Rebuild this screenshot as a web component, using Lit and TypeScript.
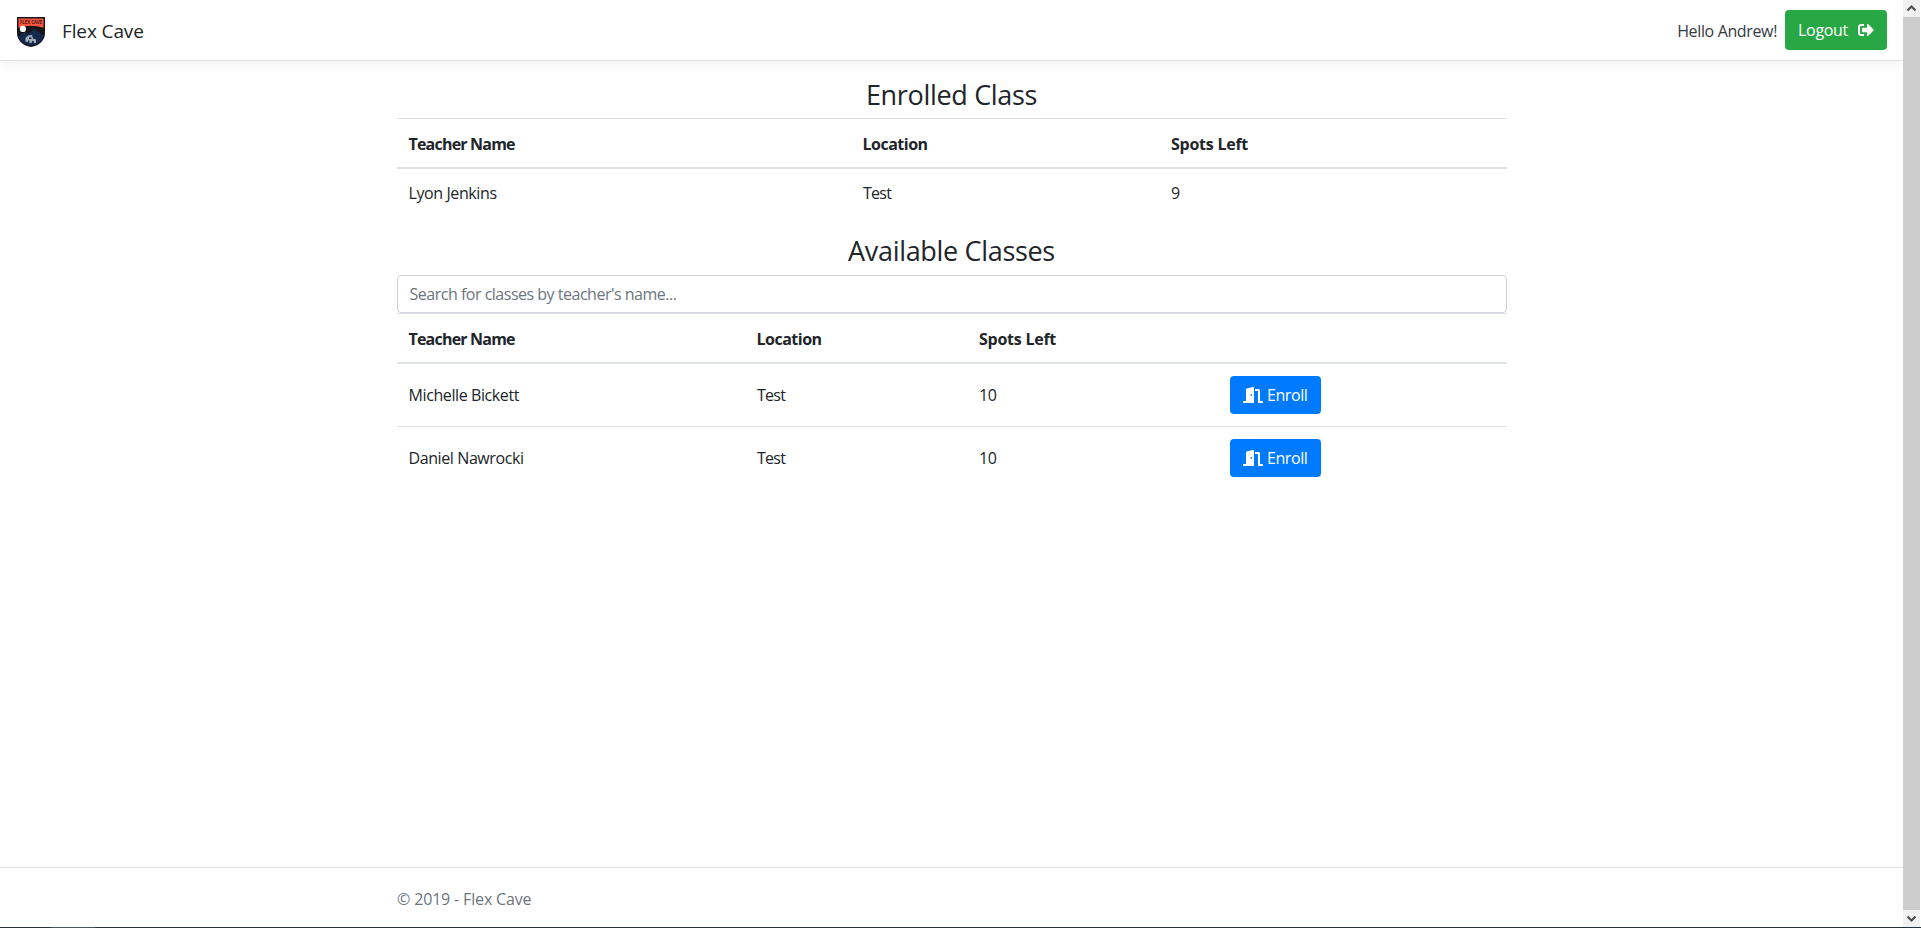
import { LitElement, html, css } from "lit";
import { customElement } from "lit/decorators.js";

const enrolled = [{ teacher: "Lyon Jenkins", location: "Test", spots: 9 }];
const available = [
  { teacher: "Michelle Bickett", location: "Test", spots: 10 },
  { teacher: "Daniel Nawrocki", location: "Test", spots: 10 },
];

const logo = html`<svg class="logo" viewBox="0 0 28 30" width="28" height="30">
  <path d="M0 0H28V16C28 23 23 28.5 14 30C5 28.5 0 23 0 16Z" fill="#15151a" />
  <path d="M1.500 1.500H26.500V10.800Q14 6.800 1.500 10.800Z" fill="#ff5640" />
  <path d="M1.500 19.500L8 15L11 17L17.500 11.800L26.500 19C25.500 24 21 27.500 14 28.500C7 27.500 2.500 24 1.500 19.500Z" fill="#14294c" />
  <circle cx="5.900" cy="11.900" r="3.100" fill="#fff" />
  <path d="M8.500 24.500V21L11 18.500L15 18L16 21.500L19 22.500V26H16.800V24H14.800V26H12.500V23.500H11V25Z" fill="#a3aebb" />
  <path d="M12 20.500H14.500V22H12Z" fill="#14294c" />
  <text class="mark" x="14" y="7.300" text-anchor="middle" textLength="22" lengthAdjust="spacingAndGlyphs">FLEX CAVE</text>
</svg>`;

const signOut = html`<svg class="sign-out" viewBox="0 0 512 512" width="16" height="16"><path fill="currentColor" d="M497 273L329 441c-15 15-41 4.500-41-17v-96H152c-13.300 0-24-10.700-24-24v-96c0-13.300 10.700-24 24-24h136V88c0-21.400 25.900-32 41-17l168 168c9.300 9.400 9.300 24.600 0 34zM192 436v-40c0-6.600-5.400-12-12-12H96c-17.700 0-32-14.300-32-32V160c0-17.700 14.300-32 32-32h84c6.600 0 12-5.400 12-12V76c0-6.600-5.400-12-12-12H96c-53 0-96 43-96 96v192c0 53 43 96 96 96h84c6.600 0 12-5.400 12-12z"/></svg>`;

const door = html`<svg class="door" viewBox="0 0 640 512" width="20" height="16"><path fill="currentColor" d="M624 448h-80V113.450C544 86.190 522.470 64 496 64H384v64h96v384h144c8.840 0 16-7.160 16-16v-32c0-8.840-7.160-16-16-16zM312.240 1.010l-192 49.740C105.990 54.440 96 67.700 96 82.920V448H16c-8.840 0-16 7.160-16 16v32c0 8.840 7.160 16 16 16h336V33.180c0-21.580-19.560-37.410-39.760-32.170zM264 288c-13.250 0-24-14.330-24-32s10.750-32 24-32 24 14.330 24 32-10.750 32-24 32z"/></svg>`;

@customElement("app-root")
export class AppRoot extends LitElement {
  static styles = css`
    :host {
      display: grid;
      grid-template-columns: 1903px 17px 1px;
      grid-template-rows: 927px 1px;
      width: 1921px;
      height: 928px;
      overflow: hidden;
      background: #fff;
      color: #212529;
      font: 400 16px/24px "Open Sans", "Noto Sans", sans-serif;
    }
    * { box-sizing: border-box; }
    .page { display: flex; flex-direction: column; min-height: 0; }
    .navbar {
      display: flex;
      align-items: center;
      flex: none;
      height: 61px;
      padding: 0 16px;
      border-bottom: 1px solid #dee2e6;
      box-shadow: 0 4px 12px rgba(0, 0, 0, 0.05);
      margin-bottom: 16px;
    }
    .logo { display: block; margin: 4px 17px 0 1px; }
    .mark { font: 700 5px "Open Sans", sans-serif; fill: #3a1414; }
    .brand { font-size: 19px; letter-spacing: -0.12px; flex: 1; padding-top: 1px; }
    .hello { color: #343a40; letter-spacing: -0.36px; margin-right: 8px; padding-top: 1px; }
    .btn {
      display: inline-flex;
      align-items: center;
      justify-content: space-between;
      height: 38px;
      padding: 0 13px;
      border: 0;
      border-radius: 4px;
      color: #fff;
      font: inherit;
      letter-spacing: -0.4px;
    }
    .logout { width: 102px; height: 40px; background: #28a745; letter-spacing: -0.3px; }
    .enroll { width: 91px; background: #007bff; }
    .container { width: 1110px; margin: 0 auto; }
    .main { flex: 1; }
    .title {
      height: 34px;
      margin: 0 0 8px;
      padding-top: 1px;
      font-size: 27px;
      line-height: 33px;
      font-weight: 400;
      text-align: center;
      letter-spacing: -0.32px;
    }
    .title.first { height: 33px; }
    .table { width: 100%; table-layout: fixed; border-collapse: collapse; margin: 0 0 16px; }
    th, td { padding: 12px; border-top: 1px solid #dee2e6; vertical-align: middle; text-align: left; letter-spacing: -0.4px; }
    th { padding: 12.500px 12px 11.500px; border-bottom: 2px solid #dee2e6; font-weight: 700; letter-spacing: -0.5px; }
    th:first-child { letter-spacing: -0.8px; }
    th:nth-child(3) { letter-spacing: -0.25px; }
    td:nth-child(2) { letter-spacing: -0.75px; }
    td:nth-child(2), td:nth-child(3), th:nth-child(3) { padding-left: 12.500px; }
    .search {
      display: block;
      width: 100%;
      height: 38px;
      padding: 6px 12px;
      border: 1px solid #ced4da;
      border-radius: 4px;
      font: inherit;
      letter-spacing: -0.49px;
      background: #fff;
    }
    .search::placeholder { color: #6c757d; opacity: 1; }
    .footer { flex: none; height: 60px; border-top: 1px solid #dee2e6; line-height: 62px; color: #6c757d; }
    .copy { letter-spacing: -0.16px; padding-left: 0.500px; }
    .scroll { display: grid; grid-template-rows: 17px 1fr 17px; background: #f0f0f0; }
    .thumb { background: #cdcdcd; }
    .chev { display: block; }
    .gutter { background: #fff; }
    .strip { grid-column: 1 / -1; background: linear-gradient(90deg, #25313b 51px, #4b555d 51px, #4b555d 95px, #25313b 95px); }
  `;

  private chevron(d: string) {
    return html`<svg class="chev" viewBox="0 0 17 17" width="17" height="17"><path d=${d} fill="none" stroke="#505050" stroke-width="2.200" /></svg>`;
  }

  render() {
    return html`
      <div class="page">
        <header class="navbar">
          ${logo}<span class="brand">Flex Cave</span>
          <span class="hello">Hello Andrew!</span>
          <button class="btn logout"><span>Logout</span>${signOut}</button>
        </header>
        <main class="main">
          <div class="container">
            <h3 class="title first">Enrolled Class</h3>
            <table class="table">
              <colgroup><col width="454" /><col width="308" /><col width="348" /></colgroup>
              <thead><tr><th>Teacher Name</th><th>Location</th><th>Spots Left</th></tr></thead>
              <tbody>${enrolled.map((c) => html`<tr><td>${c.teacher}</td><td>${c.location}</td><td>${c.spots}</td></tr>`)}</tbody>
            </table>
            <h3 class="title">Available Classes</h3>
            <input class="search" placeholder="Search for classes by teacher's name..." />
            <table class="table">
              <colgroup><col width="348" /><col width="222" /><col width="251" /><col width="289" /></colgroup>
              <thead><tr><th>Teacher Name</th><th>Location</th><th>Spots Left</th><th></th></tr></thead>
              <tbody>${available.map((c) => html`<tr><td>${c.teacher}</td><td>${c.location}</td><td>${c.spots}</td>
                <td><button class="btn enroll">${door}<span>Enroll</span></button></td></tr>`)}</tbody>
            </table>
          </div>
        </main>
        <footer class="footer"><div class="container copy">© 2019 - Flex Cave</div></footer>
      </div>
      <div class="scroll">${this.chevron("M4.500 10.500L8.500 6.500L12.500 10.500")}<div class="thumb"></div>${this.chevron("M4.500 6.500L8.500 10.500L12.500 6.500")}</div>
      <div class="gutter"></div>
      <div class="strip"></div>
    `;
  }
}
